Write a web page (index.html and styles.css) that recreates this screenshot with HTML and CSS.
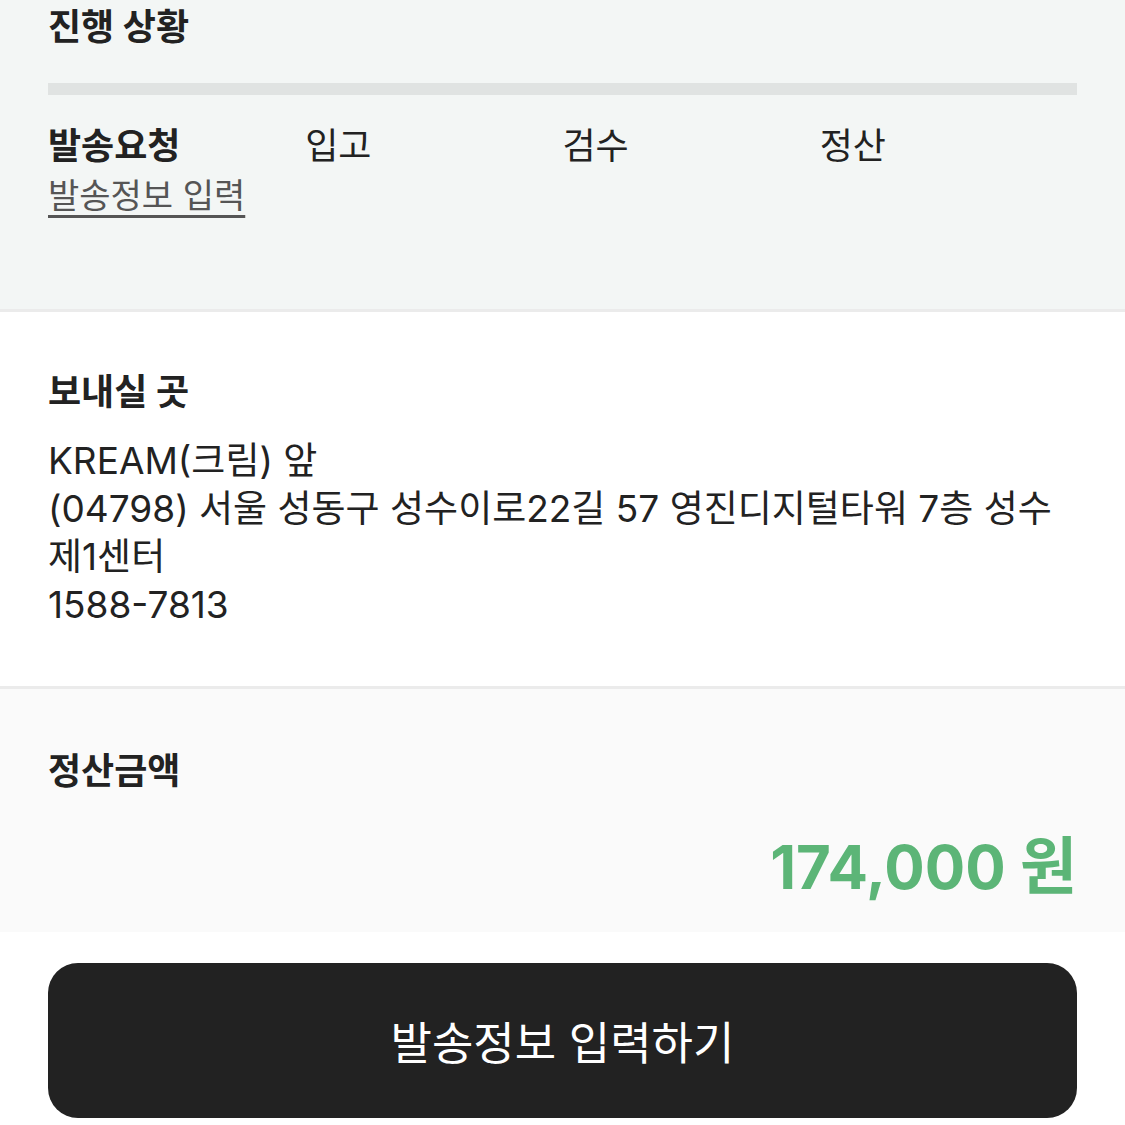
FILE: index.html
```html
<!DOCTYPE html>
<html lang="ko">
<head>
    <meta charset="UTF-8">
    <meta name="viewport" content="width=device-width, initial-scale=1.0">
    <title>발송정보</title>
    <link rel="stylesheet" href="styles.css">
</head>
<body>
    <section class="progress-section">
        <h2 class="section-title">진행 상황</h2>
        <div class="progress-bar"></div>
        <div class="steps">
            <div class="step active">
                <div class="step-name">발송요청</div>
                <a class="step-link" href="#">발송정보 입력</a>
            </div>
            <div class="step"><div class="step-name">입고</div></div>
            <div class="step"><div class="step-name">검수</div></div>
            <div class="step"><div class="step-name">정산</div></div>
        </div>
    </section>

    <section class="address-section">
        <h2 class="section-title">보내실 곳</h2>
        <div class="address">
            <p>KREAM(크림) 앞</p>
            <p>(04798) 서울 성동구 성수이로22길 57 영진디지털타워 7층 성수제1센터</p>
            <p>1588-7813</p>
        </div>
    </section>

    <section class="amount-section">
        <h2 class="section-title">정산금액</h2>
        <div class="amount">174,000 <span class="won">원</span></div>
    </section>

    <div class="bottom">
        <button class="submit-btn">발송정보 입력하기</button>
    </div>
</body>
</html>
```

FILE: styles.css
```css
* {
    margin: 0;
    padding: 0;
    box-sizing: border-box;
}

body {
    background: #fff;
    font-family: 'Inter', 'Noto Sans CJK KR', sans-serif;
    color: #222;
    width: 1125px;
}

.section-title {
    font-size: 36px;
    font-weight: 700;
    line-height: 54px;
    color: #222;
}

.progress-section {
    background: #f3f6f5;
    padding: 0 48px;
    height: 312px;
    border-bottom: 3px solid #ebebeb;
}

.progress-bar {
    margin-top: 29px;
    height: 12px;
    background: #e0e3e2;
}

.steps {
    display: grid;
    grid-template-columns: repeat(4, 1fr);
    margin-top: 26px;
}

.step-name {
    font-size: 36px;
    line-height: 50px;
    color: #222;
}

.step.active .step-name {
    font-weight: 700;
}

.step-link {
    display: inline-block;
    font-size: 34px;
    line-height: 50px;
    color: #555;
    text-decoration: underline;
    text-decoration-thickness: 3px;
    text-underline-offset: 7px;
}

.address-section {
    padding: 53px 48px 57px;
    border-bottom: 3px solid #ebebeb;
}

.address {
    margin-top: 18px;
    font-size: 37px;
    line-height: 48px;
    color: #222;
}

.amount-section {
    background: #fafafa;
    padding: 55px 48px 25px;
}

.amount {
    text-align: right;
    font-size: 60px;
    font-weight: 700;
    color: #5cb577;
    line-height: 80px;
    margin-top: 29px;
}

.amount .won {
    font-size: 62px;
}

.bottom {
    padding: 31px 48px 0;
}

.submit-btn {
    width: 100%;
    height: 155px;
    border: none;
    border-radius: 30px;
    background: #222;
    color: #fff;
    font-family: inherit;
    font-size: 45px;
    font-weight: 400;
}
```
